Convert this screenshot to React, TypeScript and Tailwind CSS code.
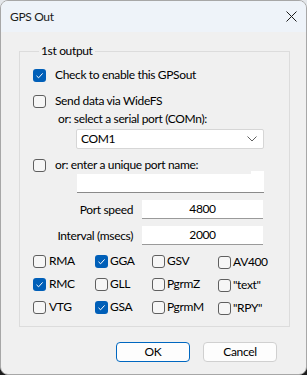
import type { ReactNode } from 'react';

const FONT = { fontFamily: 'Lato, "Noto Sans", sans-serif', letterSpacing: '-0.35px' };

const Box = ({ checked }: { checked?: boolean }) =>
    checked ? (
        <span className="w-[13px] h-[13px] shrink-0 rounded-[3px] bg-[#005fb8] flex items-center justify-center">
            <svg width="9" height="9" viewBox="0 0 9 9" fill="none">
                <path d="M1.5 4.8 L3.6 6.8 L7.6 2.4" stroke="#ffffff" strokeWidth="1" />
            </svg>
        </span>
    ) : (
        <span className="w-[13px] h-[13px] shrink-0 rounded-[3px] border border-[#5f5f5f] bg-[#f6f6f6]" />
    );

const Check = ({ checked, gap, children, className = '' }: { checked?: boolean; gap: string; children: ReactNode; className?: string }) => (
    <div className={`flex items-center h-[16px] ${gap} ${className}`}>
        <Box checked={checked} />
        <span className="leading-[16px] whitespace-nowrap">{children}</span>
    </div>
);

const Field = ({ label, value }: { label: string; value: string }) => (
    <div className="flex items-center">
        <span className="w-[114px] text-right pr-[1px] leading-[16px]">{label}</span>
        <div className="ml-[8px] w-[121px] h-[19px] bg-white border-b border-[#9a9a9a] flex items-center justify-center leading-[16px]">
            {value}
        </div>
    </div>
);

export default function App() {
    return (
        <div
            className="w-[307px] h-[375px] bg-[linear-gradient(to_bottom,#e4e7eb_50%,#1c1c1c_50%)] text-[12px] text-black"
            style={FONT}
        >
            <div className="w-full h-full rounded-[8px] border border-[#a7a7a7] bg-[#f0f0f0] overflow-hidden flex flex-col">
                <div className="h-[31px] shrink-0 bg-[#eef3f9] flex items-center justify-between pl-[9px] pr-[9px]">
                    <span className="text-[12px] text-[#1b1b1b]">GPS Out</span>
                    <svg width="11" height="11" viewBox="0 0 11 11" fill="none">
                        <path d="M0.5 0.5 L10.5 10.5 M10.5 0.5 L0.5 10.5" stroke="#1b1b1b" strokeWidth="1" />
                    </svg>
                </div>

                <fieldset className="mt-[11px] ml-[18px] mr-[16px] border border-[#dcdcdc] pl-[13px] pb-[10px]">
                    <legend className="ml-[6px] px-[2px] leading-[16px]">1st output</legend>

                    <Check checked gap="gap-[9px]" className="mt-[8px]">Check to enable this GPSout</Check>
                    <Check gap="gap-[9px]" className="mt-[10px]">Send data via WideFS</Check>
                    <div className="mt-[2px] ml-[25px] leading-[16px] h-[16px]">or: select a serial port (COMn):</div>
                    <div className="mt-[2px] ml-[43px] w-[188px] h-[20px] bg-white border border-[#d6d6d6] rounded-[2px] flex items-center justify-between pl-[4px] pr-[6px]">
                        <span className="leading-[16px]">COM1</span>
                        <svg width="10" height="6" viewBox="0 0 10 6" fill="none">
                            <path d="M0.5 0.5 L5 5 L9.5 0.5" stroke="#606060" strokeWidth="1" />
                        </svg>
                    </div>
                    <Check gap="gap-[9px]" className="mt-[8px]">or: enter a unique port name:</Check>
                    <div className="relative mt-[1px] ml-[44px] w-[187px] h-[19px] bg-white border-b border-[#8a8a8a]">
                        <div className="absolute right-0 -top-[3px] w-[13px] h-[3px] bg-white" />
                    </div>

                    <div className="mt-[7px] -ml-[13px] flex flex-col gap-[7px]">
                        <Field label="Port speed" value="4800" />
                        <Field label="Interval (msecs)" value="2000" />
                    </div>

                    <div className="mt-[8px] grid grid-cols-[62px_57px_66px_1fr] gap-y-[6px]">
                        <Check gap="gap-[3px]">RMA</Check>
                        <Check checked gap="gap-[2px]">GGA</Check>
                        <Check gap="gap-[2px]">GSV</Check>
                        <Check gap="gap-[2px]" className="mt-[1px]">AV400</Check>
                        <Check checked gap="gap-[3px]">RMC</Check>
                        <Check gap="gap-[2px]">GLL</Check>
                        <Check gap="gap-[2px]">PgrmZ</Check>
                        <Check gap="gap-[2px]" className="mt-[1px]">"text"</Check>
                        <Check gap="gap-[3px]">VTG</Check>
                        <Check checked gap="gap-[2px]">GSA</Check>
                        <Check gap="gap-[2px]">PgrmM</Check>
                        <Check gap="gap-[2px]" className="mt-[1px]">"RPY"</Check>
                    </div>
                </fieldset>

                <div className="mt-[15px] mr-[29px] flex justify-end gap-[13px]">
                    <button className="w-[74px] h-[20px] rounded-[4px] bg-[#fdfdfd] border border-[#0067c0] leading-[16px]">OK</button>
                    <button className="w-[74px] h-[20px] rounded-[4px] bg-[#fdfdfd] border border-[#d0d0d0] leading-[16px]">Cancel</button>
                </div>
            </div>
        </div>
    );
}
